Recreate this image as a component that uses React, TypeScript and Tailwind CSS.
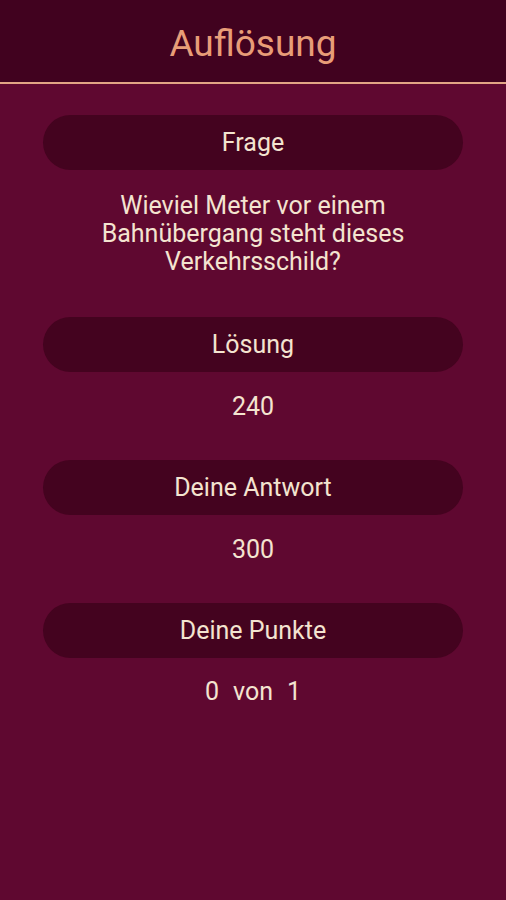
const sections = [
  { label: "Lösung", value: "240" },
  { label: "Deine Antwort", value: "300" },
]

function Pill({ children }: { children: React.ReactNode }) {
  return (
    <div className="mx-[43px] h-[55px] rounded-full bg-[#44031f] flex items-center justify-center text-[25px] text-[#f4e4d0]">
      {children}
    </div>
  )
}

export default function App() {
  return (
    <div
      className="w-[506px] h-[900px] bg-[#5f0830] flex flex-col"
      style={{ fontFamily: "Roboto, 'Noto Sans', sans-serif" }}
    >
      {/* Kopfzeile */}
      <header className="h-[84px] shrink-0 bg-[#41021f] border-b-2 border-[#e3a585] flex items-center justify-center">
        <h1 className="text-[37px] text-[#e89d78] leading-none pt-[5px]">Auflösung</h1>
      </header>

      <main className="flex flex-col pt-[31px]">
        <Pill>Frage</Pill>
        <p className="w-[340px] mx-auto mt-[22px] mb-[41px] text-center text-[25px] leading-[28px] text-[#f4e4d0]">
          Wieviel Meter vor einem Bahnübergang steht dieses Verkehrsschild?
        </p>

        {sections.map((s) => (
          <div key={s.label} className="flex flex-col">
            <Pill>{s.label}</Pill>
            <p className="mt-[21px] mb-[39px] text-center text-[25px] leading-[28px] text-[#f4e4d0]">
              {s.value}
            </p>
          </div>
        ))}

        <Pill>Deine Punkte</Pill>
        <div className="mt-[20px] flex justify-center gap-[14px] text-[25px] leading-[28px] text-[#f4e4d0]">
          <span>0</span>
          <span>von</span>
          <span>1</span>
        </div>
      </main>
    </div>
  )
}
